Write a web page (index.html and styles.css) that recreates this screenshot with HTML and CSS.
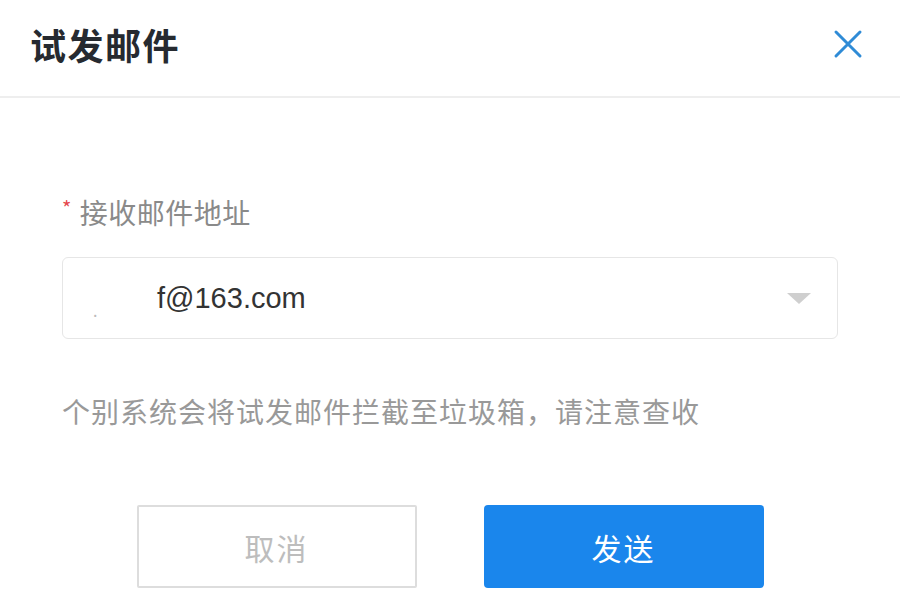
FILE: index.html
```html
<!DOCTYPE html>
<html lang="zh">
<head>
<meta charset="utf-8">
<link rel="stylesheet" href="styles.css">
</head>
<body>
<div class="dialog">
  <header class="dlg-header">
    <h1 class="dlg-title">试发邮件</h1>
    <button class="dlg-close" aria-label="关闭">
      <svg width="30" height="30" viewBox="0 0 30 30"><path d="M3 3 L27 27 M27 3 L3 27" stroke="#2f8bd6" stroke-width="3" fill="none" stroke-linecap="round"/></svg>
    </button>
  </header>
  <div class="dlg-body">
    <div class="field-label"><span class="req">*</span>接收邮件地址</div>
    <div class="select">
      <span class="select-dot">.</span>
      <span class="select-value">f@163.com</span>
      <span class="select-arrow"></span>
    </div>
    <p class="hint">个别系统会将试发邮件拦截至垃圾箱，请注意查收</p>
    <div class="actions">
      <button class="btn btn-cancel">取消</button>
      <button class="btn btn-primary">发送</button>
    </div>
  </div>
</div>
</body>
</html>
```
FILE: styles.css
```css
* { box-sizing: border-box; }
html, body {
  margin: 0;
  padding: 0;
  background: #ffffff;
  font-family: "Noto Sans CJK SC", "Noto Sans", "Liberation Sans", sans-serif;
}
.dialog {
  width: 900px;
  height: 615px;
  background: #fff;
}
.dlg-header {
  height: 98px;
  display: flex;
  align-items: center;
  justify-content: space-between;
  padding: 0 37px 8px 30px;
  border-bottom: 2px solid #eeeeee;
}
.dlg-title {
  margin: 0;
  font-size: 36px;
  font-weight: 700;
  color: #262a30;
  letter-spacing: 1.5px;
}
.dlg-close {
  border: 0;
  background: none;
  padding: 0;
  width: 30px;
  height: 30px;
  display: flex;
}
.dlg-body {
  padding: 94px 62px 0 62px;
}
.field-label {
  font-size: 28px;
  line-height: 40px;
  color: #8a8a8a;
  display: flex;
  align-items: center;
  letter-spacing: 0.5px;
}
.req {
  color: #e5484d;
  font-size: 20px;
  margin-right: 8px;
  position: relative;
  top: -4px;
}
.select {
  margin-top: 25px;
  height: 82px;
  border: 1px solid #e6e6e6;
  border-radius: 6px;
  display: flex;
  align-items: center;
  padding: 0 26px 0 30px;
}
.select-dot {
  color: #bbbbbb;
  font-size: 16px;
  position: relative;
  top: 12px;
  width: 64px;
}
.select-value {
  flex: 1;
  font-family: "Liberation Sans", "Noto Sans", sans-serif;
  font-size: 29px;
  color: #333;
}
.select-arrow {
  width: 0;
  height: 0;
  border-left: 12px solid transparent;
  border-right: 12px solid transparent;
  border-top: 11px solid #cfcfcf;
}
.hint {
  margin: 50px 0 0 0;
  font-size: 28px;
  line-height: 44px;
  color: #999999;
  letter-spacing: 1px;
}
.actions {
  margin-top: 72px;
  display: flex;
  justify-content: center;
  gap: 67px;
}
.btn {
  width: 280px;
  height: 83px;
  font-family: "Noto Sans CJK SC", sans-serif;
  font-size: 30px;
  border-radius: 4px;
  letter-spacing: 2px;
}
.btn-cancel {
  background: #fff;
  border: 2px solid #dddddd;
  border-radius: 2px;
  color: #bdbdbd;
}
.btn-primary {
  background: #1a86ec;
  border: 0;
  color: #fff;
}
```
